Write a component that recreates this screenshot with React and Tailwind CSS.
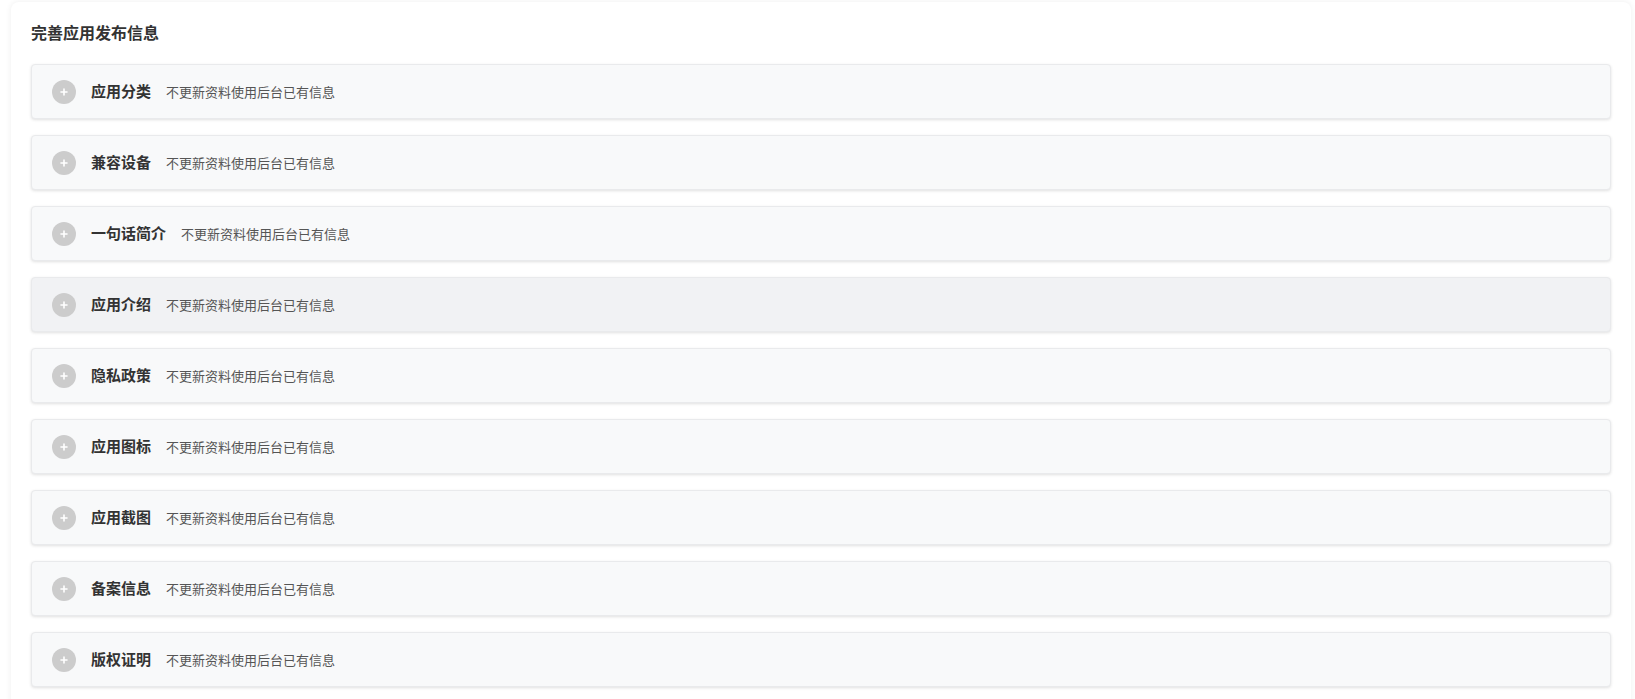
const items = [
  '应用分类',
  '兼容设备',
  '一句话简介',
  '应用介绍',
  '隐私政策',
  '应用图标',
  '应用截图',
  '备案信息',
  '版权证明',
];

function PlusIcon() {
  return (
    <span className="flex h-6 w-6 shrink-0 items-center justify-center rounded-full bg-[#cccccc]">
      <svg width="10" height="10" viewBox="0 0 10 10">
        <path d="M5 2v6M2 5h6" stroke="#fff" strokeWidth="1.6" strokeLinecap="round" />
      </svg>
    </span>
  );
}

function Row({ title, active }) {
  return (
    <div
      className={`flex h-[55px] items-center rounded-[4px] border border-[#e9eaec] pl-[20px] shadow-[0_1px_3px_rgba(0,0,0,0.12)] ${
        active ? 'bg-[#f1f2f4]' : 'bg-[#f8f9fa]'
      }`}
    >
      <PlusIcon />
      <span className="ml-[15px] text-[15px] font-semibold text-[#333]">{title}</span>
      <span className="ml-[15px] text-[13px] text-[#555]">不更新资料使用后台已有信息</span>
    </div>
  );
}

export default function App() {
  return (
    <div
      className="min-h-screen bg-white pl-[11px] pr-[4px] pt-[2px]"
      style={{ fontFamily: '"Noto Sans CJK SC", "Noto Sans", sans-serif' }}
    >
      <div className="rounded-lg bg-white px-5 pt-[18px] pb-6 shadow-[0_0_6px_rgba(0,0,0,0.07)]">
        <h1 className="h-6 text-base leading-6 font-semibold text-[#333]">完善应用发布信息</h1>
        <div className="mt-[20px] flex flex-col gap-4">
          {items.map((t, i) => (
            <Row key={t} title={t} active={i === 3} />
          ))}
        </div>
      </div>
    </div>
  );
}
